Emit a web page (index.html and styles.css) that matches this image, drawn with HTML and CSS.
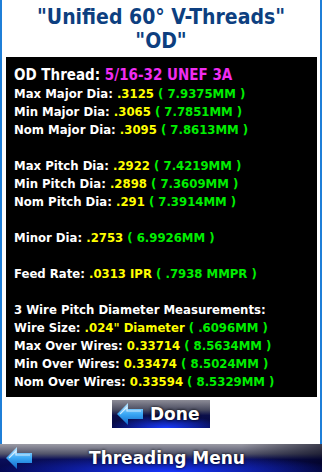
FILE: index.html
```html
<!DOCTYPE html>
<html lang="en">
<head>
    <meta charset="UTF-8">
    <meta name="viewport" content="width=device-width, initial-scale=1.0">
    <title>Unified 60 V-Threads - OD</title>
    <link rel="stylesheet" href="styles.css">
</head>
<body>
    <div class="frame">
        <h1 class="title">"Unified 60° V-Threads"<br>"OD"</h1>

        <!-- thread data -->
        <div class="panel">
            <div class="line head">OD Thread: <span class="mag">5/16-32 UNEF 3A</span></div>
            <div class="line">Max Major Dia: <span class="yel">.3125</span> <span class="grn">( 7.9375MM )</span></div>
            <div class="line">Min Major Dia: <span class="yel">.3065</span> <span class="grn">( 7.7851MM )</span></div>
            <div class="line">Nom Major Dia: <span class="yel">.3095</span> <span class="grn">( 7.8613MM )</span></div>
            <div class="line gap"></div>
            <div class="line">Max Pitch Dia: <span class="yel">.2922</span> <span class="grn">( 7.4219MM )</span></div>
            <div class="line">Min Pitch Dia: <span class="yel">.2898</span> <span class="grn">( 7.3609MM )</span></div>
            <div class="line">Nom Pitch Dia: <span class="yel">.291</span> <span class="grn">( 7.3914MM )</span></div>
            <div class="line gap"></div>
            <div class="line">Minor Dia: <span class="yel">.2753</span> <span class="grn">( 6.9926MM )</span></div>
            <div class="line gap"></div>
            <div class="line">Feed Rate: <span class="yel">.0313 IPR</span> <span class="grn">( .7938 MMPR )</span></div>
            <div class="line gap"></div>
            <div class="line">3 Wire Pitch Diameter Measurements:</div>
            <div class="line">Wire Size: <span class="yel">.024" Diameter</span> <span class="grn">( .6096MM )</span></div>
            <div class="line">Max Over Wires: <span class="yel">0.33714</span> <span class="grn">( 8.5634MM )</span></div>
            <div class="line">Min Over Wires: <span class="yel">0.33474</span> <span class="grn">( 8.5024MM )</span></div>
            <div class="line">Nom Over Wires: <span class="yel">0.33594</span> <span class="grn">( 8.5329MM )</span></div>
        </div>

        <div class="done-row">
            <button class="btn done">
                <svg class="arrow" width="28" height="24" viewBox="0 0 28 24">
                    <defs>
                        <linearGradient id="ag1" x1="0" y1="0" x2="0" y2="1">
                            <stop offset="0" stop-color="#bfe6ff"/>
                            <stop offset="0.5" stop-color="#3aa8f5"/>
                            <stop offset="1" stop-color="#1266c8"/>
                        </linearGradient>
                    </defs>
                    <path d="M1 12 L12 1 L12 7 L27 7 L27 17 L12 17 L12 23 Z" fill="url(#ag1)"/>
                    <path d="M4 12 L11 5 L11 9 L25 9" fill="none" stroke="#e8f6ff" stroke-width="1.2" opacity="0.8"/>
                </svg>
                <span>Done</span>
            </button>
        </div>
    </div>

    <div class="menu-bar">
        <svg class="arrow bar-arrow" width="30" height="24" viewBox="0 0 28 24">
            <defs>
                <linearGradient id="ag2" x1="0" y1="0" x2="0" y2="1">
                    <stop offset="0" stop-color="#bfe6ff"/>
                    <stop offset="0.5" stop-color="#3aa8f5"/>
                    <stop offset="1" stop-color="#1266c8"/>
                </linearGradient>
            </defs>
            <path d="M1 12 L12 1 L12 7 L27 7 L27 17 L12 17 L12 23 Z" fill="url(#ag2)"/>
            <path d="M4 12 L11 5 L11 9 L25 9" fill="none" stroke="#e8f6ff" stroke-width="1.2" opacity="0.8"/>
        </svg>
        <span class="bar-title">Threading Menu</span>
    </div>
</body>
</html>
```

FILE: styles.css
```css
body {
    margin: 0;
    width: 322px;
    height: 472px;
    overflow: hidden;
    background: #fff;
    font-family: "DejaVu Sans", Verdana, sans-serif;
}
.frame {
    height: 444px;
    border-left: 2px solid #1f7fd8;
    border-right: 2px solid #1f7fd8;
    box-sizing: border-box;
}
.title {
    margin: 0;
    padding-top: 5px;
    height: 52px;
    text-align: center;
    color: #0d3f80;
    font-size: 21px;
    font-stretch: condensed;
    font-weight: bold;
    line-height: 24px;
}
.panel {
    margin: 0 3px 0 4px;
    height: 340px;
    background: #000;
    color: #fff;
    padding: 8px 0 0 8px;
    box-sizing: border-box;
    font-size: 13px;
    font-stretch: condensed;
    font-weight: bold;
}
.line {
    height: 18px;
    line-height: 18px;
    white-space: nowrap;
}
.line.head {
    height: 20px;
    line-height: 20px;
    font-size: 15px;
}
.mag { color: #f02cf0; }
.yel { color: #ffff00; }
.grn { color: #00ee00; }
.done-row {
    display: flex;
    justify-content: center;
    padding-top: 3px;
}
.btn {
    display: flex;
    align-items: center;
    gap: 6px;
    width: 98px;
    height: 28px;
    padding: 0 4px;
    border: 0;
    color: #fff;
    font-family: "DejaVu Sans", Verdana, sans-serif;
    font-weight: bold;
    font-size: 17px;
    text-shadow: 0 0 3px #000;
    background:
        radial-gradient(ellipse 60% 45% at 55% 100%, #1a3cff 0%, rgba(20, 40, 230, 0) 100%),
        linear-gradient(#8c8c96 0%, #4a4c60 35%, #0b0f4a 55%, #030640 100%);
}
.menu-bar {
    height: 28px;
    display: flex;
    align-items: center;
    position: relative;
    background:
        radial-gradient(ellipse 55% 60% at 52% 100%, #1836ff 0%, rgba(20, 40, 230, 0) 100%),
        linear-gradient(90deg, rgba(0, 0, 0, 0) 75%, rgba(0, 0, 20, 0.6) 100%),
        linear-gradient(#9c9ca6 0%, #52546a 35%, #0a0e58 55%, #03064a 100%);
}
.bar-arrow {
    margin-left: 4px;
}
.bar-title {
    flex: 1;
    text-align: center;
    margin-right: 30px;
    padding-left: 8px;
    color: #fff;
    font-weight: bold;
    font-size: 17px;
    text-shadow: 0 0 3px #000;
}
```
